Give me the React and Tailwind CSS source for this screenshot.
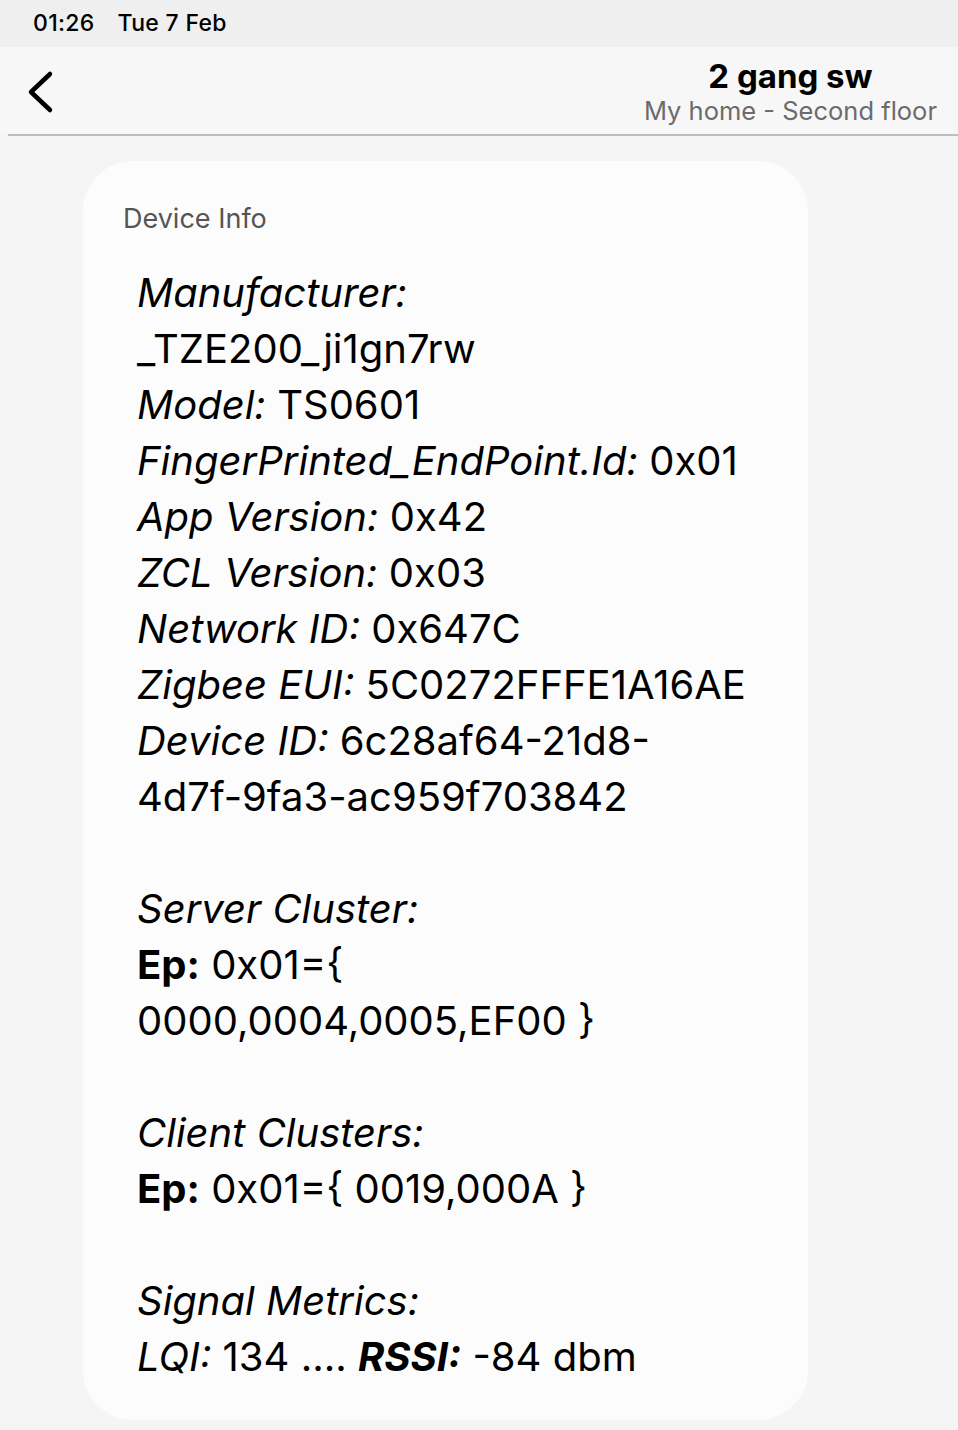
import React from "react";

const font = { fontFamily: "Inter, 'Noto Sans', sans-serif" };

function L({ children }) {
  return <div className="whitespace-nowrap h-[56px] leading-[56px]">{children}</div>;
}

export default function App() {
  return (
    <div className="w-[958px] h-[1430px] bg-[#f5f5f5] text-black overflow-hidden" style={font}>
      <div className="h-[47px] bg-[#efefef] flex items-center pl-[33px] text-[23px] font-medium tracking-[0.3px]">
        <span>01:26</span>
        <span className="ml-[23px]">Tue 7 Feb</span>
      </div>
      <div className="h-[87px] bg-[#f7f7f7] flex items-center justify-between pr-[21px] pl-[26px]">
        <svg width="28" height="44" viewBox="0 0 28 44" className="mt-[2px]">
          <path d="M24 4 L5 22 L24 40" fill="none" stroke="#000" strokeWidth="4.5" strokeLinecap="round" strokeLinejoin="round" />
        </svg>
        <div className="flex flex-col items-center mt-[4px]">
          <div className="text-[33px] font-bold leading-[36px]">2 gang sw</div>
          <div className="text-[25.5px] leading-[33px] text-[#6b6b6b]">My home - Second floor</div>
        </div>
      </div>
      <div className="ml-[8px] h-[2px] bg-[#bdbdbd]" />
      <div className="pt-[25px] pl-[83px]">
        <div className="w-[725px] bg-[#fcfcfc] rounded-[50px] pt-[40px] pb-[35px] pl-[40px]">
          <div className="text-[27px] leading-[36px] text-[#555555]">Device Info</div>
          <div className="pl-[14px] pt-[28px] text-[40px] text-black">
            <L><i>Manufacturer:</i></L>
            <L>_TZE200_ji1gn7rw</L>
            <L><i>Model:</i> TS0601</L>
            <L><i>FingerPrinted_EndPoint.Id:</i> 0x01</L>
            <L><i>App Version:</i> 0x42</L>
            <L><i>ZCL Version:</i> 0x03</L>
            <L><i>Network ID:</i> 0x647C</L>
            <L><i>Zigbee EUI:</i> 5C0272FFFE1A16AE</L>
            <L><i>Device ID:</i> 6c28af64-21d8-</L>
            <L>4d7f-9fa3-ac959f703842</L>
            <L>&nbsp;</L>
            <L><i>Server Cluster:</i></L>
            <L><b>Ep:</b> 0x01={"{"}</L>
            <L>0000,0004,0005,EF00 {"}"}</L>
            <L>&nbsp;</L>
            <L><i>Client Clusters:</i></L>
            <L><b>Ep:</b> 0x01={"{"} 0019,000A {"}"}</L>
            <L>&nbsp;</L>
            <L><i>Signal Metrics:</i></L>
            <L><i>LQI:</i> 134 .... <b><i>RSSI:</i></b> -84 dbm</L>
          </div>
        </div>
      </div>
    </div>
  );
}
